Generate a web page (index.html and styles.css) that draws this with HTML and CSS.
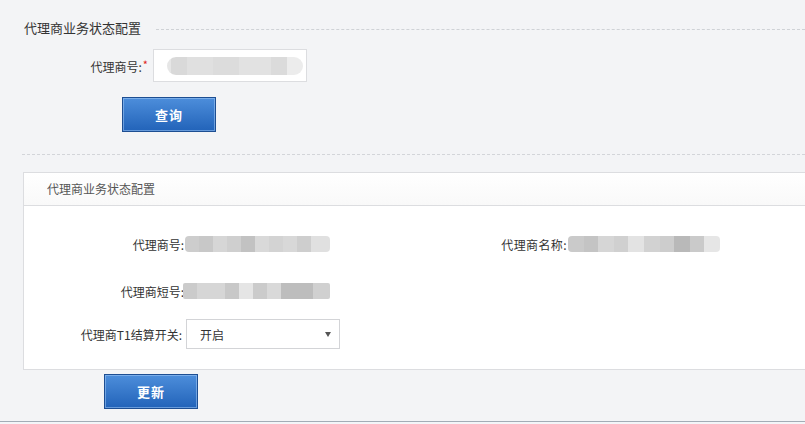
FILE: index.html
```html
<!DOCTYPE html>
<html lang="zh-CN">
  <head>
    <meta charset="UTF-8" />
    <meta name="viewport" content="width=device-width, initial-scale=1.0" />
    <title>代理商业务状态配置</title>
    <link rel="stylesheet" href="styles.css">
  </head>
  <body>
    <div class="legend">
      <span class="legend-title">代理商业务状态配置</span>
      <span class="legend-line"></span>
    </div>
    <form id="queryForm">
      <div class="form-row">
        <label for="agentNo" class="required">代理商号:</label>
        <div class="input-box" id="agentNo">
          <span class="mosaic mosaic-input"></span>
        </div>
      </div>
      <button type="submit" class="btn btn-query">查询</button>
    </form>

    <div class="separator"></div>

    <div class="panel">
      <div class="panel-head">代理商业务状态配置</div>
      <div class="panel-body">
        <div class="info-row">
          <span class="info-label">代理商号:</span>
          <span class="info-value"><span class="mosaic mosaic-a"></span></span>
          <span class="info-label label-wide">代理商名称:</span>
          <span class="info-value"><span class="mosaic mosaic-b"></span></span>
        </div>
        <div class="info-row row-short">
          <span class="info-label">代理商短号:</span>
          <span class="info-value"><span class="mosaic mosaic-c"></span></span>
        </div>
        <div class="info-row">
          <span class="info-label label-select">代理商T1结算开关:</span>
          <span class="select-box">
            <select name="t1Switch">
              <option value="1">开启</option>
              <option value="0">关闭</option>
            </select>
          </span>
        </div>
      </div>
    </div>
    <button type="button" class="btn btn-update">更新</button>

    <div class="footer"></div>
  </body>
</html>
```

FILE: styles.css
```css
body {
  margin: 0;
  background: #f3f4f6;
  font-family: "Noto Sans CJK SC", "Liberation Sans", sans-serif;
  font-size: 12px;
  color: #333;
  overflow: hidden;
}
.legend {
  display: flex;
  align-items: center;
  margin-top: 20px;
  height: 16px;
  padding-left: 24px;
}
.legend-title {
  font-size: 13px;
  line-height: 16px;
  color: #333;
  white-space: nowrap;
}
.legend-line {
  flex: 1;
  margin-left: 15px;
  border-top: 1px dashed #cfd2d6;
  margin-top: 2px;
}
.form-row {
  display: flex;
  align-items: center;
  margin-top: 13px;
}
.form-row label {
  width: 148px;
  text-align: right;
  margin-right: 5px;
}
.required:after {
  content: "*";
  color: #e02020;
  font-size: 11px;
  vertical-align: 3px;
  margin-left: 1px;
}
.input-box {
  width: 152px;
  height: 31px;
  background: #fff;
  border: 1px solid #dcdde0;
  display: flex;
  align-items: center;
}
.btn {
  display: block;
  width: 94px;
  height: 35px;
  background: linear-gradient(#4d8edb, #2263b9);
  border: 1px solid #1d4e92;
  box-shadow: inset 0 0 0 1px rgba(160, 200, 245, 0.55);
  color: #fff;
  font-family: "Noto Sans CJK SC", sans-serif;
  font-size: 13px;
  font-weight: bold;
  letter-spacing: 1px;
  cursor: pointer;
  padding: 0;
}
.btn-query {
  margin: 15px 0 0 122px;
}
.separator {
  margin: 22px 0 0 22px;
  border-top: 1px dashed #d3d5d9;
}
.panel {
  margin: 17px -10px 0 23px;
  background: #fff;
  border: 1px solid #dcdde0;
}
.panel-head {
  height: 32px;
  line-height: 32px;
  padding-left: 23px;
  color: #555;
  background: linear-gradient(#ffffff, #f9f9f9);
  border-bottom: 1px solid #dcdde0;
}
.panel-body {
  padding: 23px 0 20px;
  display: flex;
  flex-direction: column;
  gap: 15px;
}
.info-row {
  display: flex;
  align-items: center;
  height: 30px;
}
.row-short {
  margin-top: 2px;
  margin-bottom: -2px;
}
.info-label {
  width: 160px;
  text-align: right;
}
.label-wide {
  width: 160px;
  letter-spacing: 0.4px;
}
.label-select {
  width: 158px;
  margin-right: 4px;
}
.info-value {
  width: 223px;
  display: flex;
  align-items: center;
}
.mosaic {
  display: block;
  height: 16px;
  border-radius: 4px;
}
.mosaic-input {
  width: 136px;
  height: 18px;
  margin-left: 13px;
  border-radius: 9px;
  background: linear-gradient(90deg, #e6e6e6 0 4px, #d9d9d9 4px 20px, #e0e0e0 20px 46px, #dcdcdc 46px 72px, #e2e2e2 72px 104px, #dbdbdb 104px 120px, #ececec 120px);
}
.mosaic-a {
  width: 145px;
  margin-left: 1px;
  background: linear-gradient(90deg, #cdcdcd 0 14px, #c8c8c8 14px 28px, #d6d6d6 28px 42px, #cfcfcf 42px 56px, #c2c2c2 56px 70px, #d9d9d9 70px 84px, #d3d3d3 84px 98px, #d8d8d8 98px 112px, #cecece 112px 126px, #e0e0e0 126px);
}
.mosaic-b {
  width: 152px;
  margin-left: 1px;
  background: linear-gradient(90deg, #cacaca 0 16px, #c4c4c4 16px 30px, #d6d6d6 30px 46px, #d0d0d0 46px 60px, #e3e3e3 60px 76px, #d2d2d2 76px 92px, #cdcdcd 92px 106px, #b9b9b9 106px 122px, #cacaca 122px 136px, #e6e6e6 136px);
}
.mosaic-c {
  width: 147px;
  margin-left: -1px;
  border-radius: 2px;
  background: linear-gradient(90deg, #cbcbcb 0 14px, #d6d6d6 14px 42px, #c8c8c8 42px 56px, #e5e5e5 56px 70px, #cbcbcb 70px 84px, #d9d9d9 84px 98px, #bdbdbd 98px 130px, #d0d0d0 130px);
}
.select-box {
  position: relative;
  display: block;
  width: 154px;
  height: 30px;
}
.select-box select {
  appearance: none;
  -webkit-appearance: none;
  width: 154px;
  height: 30px;
  border: 1px solid #d3d4d7;
  background: #fff;
  padding: 0 0 0 13px;
  font-family: "Noto Sans CJK SC", sans-serif;
  font-size: 12px;
  color: #333;
  border-radius: 0;
  outline: none;
}
.select-box:after {
  content: "";
  position: absolute;
  right: 9px;
  top: 13px;
  border-left: 3px solid transparent;
  border-right: 3px solid transparent;
  border-top: 5px solid #555;
  pointer-events: none;
}
.btn-update {
  margin: 4px 0 0 104px;
}
.footer {
  margin-top: 12px;
  border-top: 1px solid #a3acb6;
  height: 10px;
  background: #f3f5f8;
}
```
